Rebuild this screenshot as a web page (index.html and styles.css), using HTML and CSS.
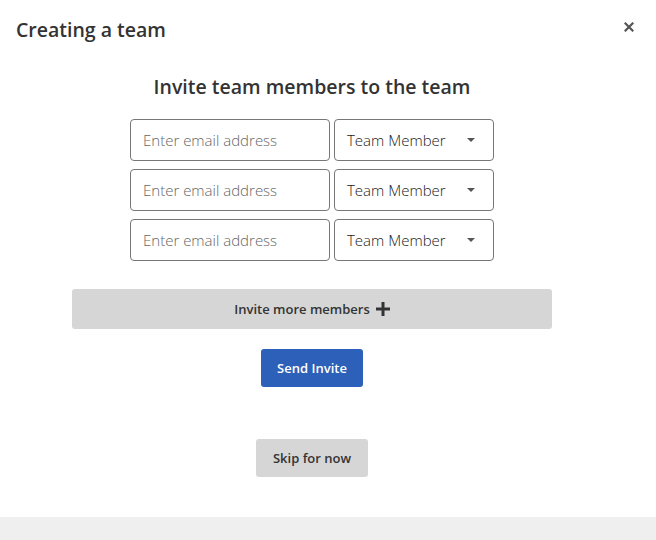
FILE: index.html
```html
<!DOCTYPE html>
<html>
<head>
<meta charset="utf-8">
<link rel="stylesheet" href="styles.css">
</head>
<body>
<div class="modal">
  <header class="modal-header">
    <h1 class="modal-title">Creating a team</h1>
    <button class="close-btn" aria-label="Close">
      <svg width="10" height="10" viewBox="0 0 10 10"><path d="M1.5 1.5 L8.5 8.5 M8.5 1.5 L1.5 8.5" stroke="#555" stroke-width="2.2" stroke-linecap="square"/></svg>
    </button>
  </header>
  <main class="modal-body">
    <h2 class="subtitle">Invite team members to the team</h2>
    <div class="rows">
      <div class="row">
        <input class="email" type="text" placeholder="Enter email address">
        <div class="select"><span>Team Member</span><span class="caret"></span></div>
      </div>
      <div class="row">
        <input class="email" type="text" placeholder="Enter email address">
        <div class="select"><span>Team Member</span><span class="caret"></span></div>
      </div>
      <div class="row">
        <input class="email" type="text" placeholder="Enter email address">
        <div class="select"><span>Team Member</span><span class="caret"></span></div>
      </div>
    </div>
    <button class="more-btn">Invite more members
      <svg width="14" height="14" viewBox="0 0 14 14"><path d="M5.5 0h3v5.5H14v3H8.5V14h-3V8.5H0v-3h5.5z" fill="#333"/></svg>
    </button>
    <button class="send-btn">Send Invite</button>
    <button class="skip-btn">Skip for now</button>
  </main>
  <footer class="modal-footer"></footer>
</div>
</body>
</html>
```
FILE: styles.css
```css
* { box-sizing: border-box; }
html, body { margin: 0; padding: 0; background: #fff; }
body { font-family: "Open Sans", "Noto Sans", sans-serif; color: #333; width: 656px; height: 540px; overflow: hidden; }
.modal { display: flex; flex-direction: column; height: 540px; }
.modal-header { display: flex; justify-content: space-between; align-items: flex-start; padding: 17px 22px 0 16px; height: 59px; }
.modal-title { margin: 0; font-size: 19.5px; font-weight: 600; color: #333; line-height: 26px; }
.close-btn { border: 0; background: none; padding: 0; margin-top: 5px; width: 10px; height: 10px; display: flex; cursor: pointer; }
.modal-body { flex: 1; display: flex; flex-direction: column; align-items: center; padding-right: 32px; }
.subtitle { margin: 15px 0 0; font-size: 19.5px; font-weight: 600; color: #333; line-height: 26px; }
.rows { display: flex; flex-direction: column; gap: 8px; margin-top: 19px; }
.row { display: flex; gap: 4px; }
.email { width: 200px; height: 42px; border: 1px solid #777; border-radius: 4px; padding: 0 12px; font-family: inherit; font-size: 15px; font-weight: 300; color: #333; outline: none; }
.email::placeholder { color: #666; font-weight: 300; }
.select { width: 160px; height: 42px; border: 1px solid #777; border-radius: 4px; padding: 0 18px 0 12px; display: flex; align-items: center; justify-content: space-between; font-size: 15px; font-weight: 300; color: #222; }
.caret { width: 0; height: 0; border-left: 4px solid transparent; border-right: 4px solid transparent; border-top: 4px solid #555; }
.more-btn { margin-top: 28px; width: 480px; height: 40px; border: 0; border-radius: 3px; background: #d6d6d6; font-family: inherit; font-size: 13px; font-weight: 600; color: #333; display: flex; align-items: center; justify-content: center; gap: 6px; }
.send-btn { margin-top: 20px; width: 102px; height: 38px; border: 0; border-radius: 3px; background: #2d60b8; color: #fff; font-family: inherit; font-size: 13px; font-weight: 600; }
.skip-btn { margin-top: 52px; width: 112px; height: 38px; border: 0; border-radius: 3px; background: #d6d6d6; color: #333; font-family: inherit; font-size: 13px; font-weight: 600; }
.modal-footer { height: 23px; background: #efefef; }
```
